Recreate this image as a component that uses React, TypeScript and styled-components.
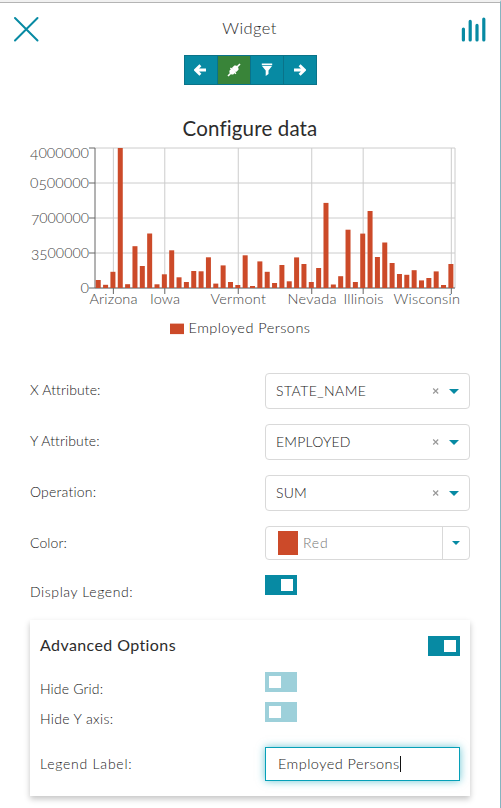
import React from 'react';
import styled, { createGlobalStyle } from 'styled-components';

const TEAL = '#078aa3';
const RED = '#cc4a29';

const GlobalStyle = createGlobalStyle`
  * { box-sizing: border-box; }
  body {
    margin: 0;
    background: #fff;
    font-family: Lato, 'Liberation Sans', sans-serif;
    font-size: 14px;
    font-weight: 300;
    color: #222;
    overflow: hidden;
  }
`;

const Panel = styled.main`
  width: 501px;
  height: 808px;
  border-top: 2px solid #f1f1f1;
  border-right: 1px solid #86b4c0;
  background: #fff;
  display: flex;
  flex-direction: column;
`;

const Header = styled.header`
  height: 53px;
  border-top: 1px solid #b4b4b4;
  padding: 0 13px 0 12px;
  display: grid;
  grid-template-columns: 27px 1fr 27px;
  align-items: center;
  justify-items: center;
`;

const Text = styled.span<{ $gap?: number }>`
  letter-spacing: ${(p) => p.$gap ?? 0}px;
  white-space: nowrap;
`;

const Title = styled(Text)`
  font-size: 16.5px;
  line-height: 20px;
  margin-bottom: 2px;
  color: #2c2c2c;
`;

const Toolbar = styled.nav`
  display: flex;
  width: 133px;
  height: 30px;
  margin: 0 auto;
  border: 1px solid #0a7389;
`;

const ToolButton = styled.button<{ $active?: boolean }>`
  flex: 1;
  padding: 0 0 1px;
  border: 0;
  background: ${(p) => (p.$active ? '#398439' : TEAL)};
  display: flex;
  align-items: center;
  justify-content: center;
  & + & { border-left: 1px solid #0a7389; }
`;

const Heading = styled.h1`
  margin: 30px 0 2px;
  height: 26px;
  line-height: 26px;
  text-align: center;
  font-size: 20.5px;
  font-weight: 400;
  color: #2c2c2c;
`;

const Chart = styled.svg`
  display: block;
  width: 500px;
  height: 230px;
`;

const Row = styled.div<{ $height: number; $label?: number }>`
  height: ${(p) => p.$height}px;
  display: grid;
  grid-template-columns: 1fr auto;
  align-items: start;
  > span { line-height: 20px; margin-top: ${(p) => p.$label ?? 7}px; }
`;

const Form = styled.section`
  padding: 0 30px;
`;

const SelectBox = styled.div`
  width: 205px;
  height: 36px;
  border: 1px solid #d9d9d9;
  border-radius: 4px;
  padding: 0 10px;
  display: flex;
  align-items: center;
  > ${Text} { margin-bottom: 2px; }
`;

const Clear = styled.span`
  margin-left: auto;
  width: 10px;
  display: flex;
`;

const Caret = styled.i<{ $size: number }>`
  border: ${(p) => p.$size}px solid transparent;
  border-top-color: ${TEAL};
  border-bottom: 0;
`;

const SelectCaret = styled(Caret)`
  margin-left: 7px;
`;

const ColorBox = styled(SelectBox)`
  height: 34px;
  padding: 0 0 0 12px;
  color: #777;
`;

const Swatch = styled.span`
  width: 20px;
  height: 24px;
  margin-right: 5px;
  background: ${RED};
`;

const ColorArrow = styled.span`
  margin-left: auto;
  width: 27px;
  height: 32px;
  border-left: 1px solid #d9d9d9;
  display: flex;
  align-items: center;
  justify-content: center;
`;

const Toggle = styled.button<{ $on?: boolean }>`
  width: 32px;
  height: 20px;
  padding: 4px;
  border: 0;
  display: flex;
  justify-content: ${(p) => (p.$on ? 'flex-end' : 'flex-start')};
  background: ${(p) => (p.$on ? TEAL : '#9dd0da')};
  &::before {
    content: '';
    width: 12px;
    height: 12px;
    background: #fff;
  }
`;

const ToggleSlot = styled.div`
  width: 205px;
`;

const Card = styled.section`
  margin: 0 30px;
  height: 176px;
  padding: 16px 10px 0;
  background: #fff;
  box-shadow: 0 3px 6px rgba(0, 0, 0, 0.23);
`;

const CardTitle = styled(Text)`
  font-size: 16px;
  font-weight: 400;
  color: #2c2c2c;
`;

const CardSlot = styled.div`
  width: 195px;
`;

const Field = styled.div`
  width: 195px;
  height: 34px;
  padding: 0 12px;
  border: 1px solid #06a0b8;
  box-shadow: 0 0 8px rgba(7, 160, 184, 0.6);
  font-size: 14.5px;
  display: flex;
  align-items: center;
  > ${Text} { margin-bottom: 2px; }
`;

const Cursor = styled.i`
  width: 1px;
  height: 16px;
  background: #111;
`;

const TOPS = [
  280, 284.8, 271.8, 148, 284.2, 246.2, 266, 233.5, 284.3, 274.3, 250.3, 277.3, 282, 271, 271.3,
  257.3, 283.6, 265.4, 282, 285, 255.3, 286, 261.4, 271.8, 283, 265, 281.3, 257.4, 264, 282, 268,
  202.9, 284.5, 276.2, 229.7, 282, 233.6, 211, 257, 242.5, 263, 274, 274.8, 270.2, 280.4, 278,
  271.4, 285, 264,
];
const BAND = 360 / TOPS.length;

/* name, band index, text start, text width */
const X_TICKS: [string, number, number, number][] = [
  ['Arizona', 2, 89.5, 48],
  ['Iowa', 9, 150, 30],
  ['Vermont', 19, 210.5, 55.5],
  ['Nevada', 29, 287.5, 49],
  ['Illinois', 36, 343.5, 40],
  ['Wisconsin', 48, 393.5, 66.5],
];

/* Each label is split into runs; a run flagged true hangs below the baseline like old-style figures. */
const Y_TICKS: { y: number; parts: [string, boolean][]; x: number; width: number }[] = [
  { y: 148, parts: [['4', true], ['000000', false]], x: 30, width: 59 },
  { y: 183, parts: [['0', false], ['5', true], ['00000', false]], x: 30, width: 59 },
  { y: 218, parts: [['7', true], ['000000', false]], x: 31, width: 58 },
  { y: 253, parts: [['35', true], ['00000', false]], x: 31, width: 58 },
  { y: 288, parts: [['0', false]], x: 80.5, width: 8.5 },
];

function EmployedChart() {
  const center = (i: number) => 95 + BAND * (i + 0.5);
  return (
    <Chart viewBox="0 143 500 230" fontFamily="Lato, sans-serif" fontWeight="300">
      <g stroke="#ccc">
        {Y_TICKS.map((t) => <line key={t.y} x1="95" x2="455" y1={t.y} y2={t.y} />)}
        {X_TICKS.map(([n, i]) => <line key={n} x1={center(i)} x2={center(i)} y1="148" y2="288" />)}
        <line x1="455" x2="455" y1="148" y2="288" />
      </g>
      <g stroke="#666">
        <line x1="95" x2="95" y1="148" y2="288" />
        <line x1="95" x2="455" y1="288" y2="288" />
        {Y_TICKS.map((t) => <line key={t.y} x1="89" x2="95" y1={t.y} y2={t.y} />)}
        {X_TICKS.map(([n, i]) => <line key={n} x1={center(i)} x2={center(i)} y1="288" y2="294" />)}
      </g>
      <g fill={RED}>
        {TOPS.map((top, i) => (
          <rect key={i} x={95.73 + BAND * i} y={top} width="5" height={288 - top} />
        ))}
        <rect x="170" y="323.6" width="14" height="10.5" />
      </g>
      <g fill="#444" fontSize="13">
        {Y_TICKS.map((t) => {
          let low = false;
          return (
            <text key={t.y} x={t.x} y={t.y === 148 ? 158 : t.y + 5} textLength={t.width} lengthAdjust="spacingAndGlyphs">
              {t.parts.map(([s, drop], k) => {
                const dy = drop === low ? 0 : drop ? 2 : -2;
                low = drop;
                return <tspan key={k} dy={dy}>{s}</tspan>;
              })}
            </text>
          );
        })}
      </g>
      <g fill="#444" fontSize="14.5">
        {X_TICKS.map(([n, , x, w]) => (
          <text key={n} x={x} y="303.5" textLength={w}>{n}</text>
        ))}
        <text x="188.5" y="333" textLength="121.5" fill="#222">Employed Persons</text>
      </g>
    </Chart>
  );
}

function Select({ value, gap }: { value: string; gap: number }) {
  return (
    <SelectBox>
      <Text $gap={gap}>{value}</Text>
      <Clear>
        <svg width="8" height="8" viewBox="0 0 8 8" stroke="#999" strokeWidth="1.2">
          <path d="M1.2 1.5l5 5M6.2 1.5l-5 5" />
        </svg>
      </Clear>
      <SelectCaret $size={5} />
    </SelectBox>
  );
}

const arrow = 'M6.4 1.2L1.6 6l4.8 4.8M1.8 6H12';

export default function App() {
  return (
    <>
      <GlobalStyle />
      <Panel>
        <Header>
          <svg width="26" height="26" viewBox="0 0 26 26" stroke={TEAL} strokeWidth="2" strokeLinecap="round">
            <path d="M2 2l22.5 22.5M24.5 2L2 24.5" />
          </svg>
          <Title $gap={0.4}>Widget</Title>
          <svg width="25" height="25" viewBox="0 0 25 25" stroke={TEAL} strokeWidth="3.2" strokeLinecap="round">
            <path d="M2.4 12v11M9.2 4.4V23M16 8.4V23M22.8 2V23" />
          </svg>
        </Header>
        <Toolbar>
          <ToolButton>
            <svg width="13" height="12" viewBox="0 0 13 12" fill="none" stroke="#fff" strokeWidth="2.8"><path d={arrow} /></svg>
          </ToolButton>
          <ToolButton $active>
            <svg width="14" height="14" viewBox="0 0 14 14">
              <g transform="rotate(-45 7 7)" fill="#fff">
                <rect x="-1.5" y="6.2" width="17" height="1.6" />
                <path d="M3.2 4.3h2V3h1.400v1.300H7.200v5.400h-.8V11H5V9.700H3.200L2 8.500v-3z" />
                <path d="M7 4h3.400L11.700 5.500v3L10.400 10H7z" />
              </g>
            </svg>
          </ToolButton>
          <ToolButton>
            <svg width="12" height="13" viewBox="0 0 12 13" fill="#fff">
              <path d="M.8.5h10.400v1.800H.8zM1 2.900h10L7.500 7.500v3.400L4.700 13V7.500z" />
            </svg>
          </ToolButton>
          <ToolButton>
            <svg width="13" height="12" viewBox="0 0 13 12" fill="none" stroke="#fff" strokeWidth="2.8"><path d={arrow} transform="matrix(-1 0 0 1 13 0)" /></svg>
          </ToolButton>
        </Toolbar>
        <Heading><Text $gap={0.15}>Configure data</Text></Heading>
        <EmployedChart />
        <Form>
          <Row $height={51}><Text $gap={0.1}>X Attribute:</Text><Select value="STATE_NAME" gap={0.45} /></Row>
          <Row $height={51}><Text $gap={0.1}>Y Attribute:</Text><Select value="EMPLOYED" gap={0.2} /></Row>
          <Row $height={51}><Text $gap={0.2}>Operation:</Text><Select value="SUM" gap={0.2} /></Row>
          <Row $height={49}>
            <Text $gap={0.1}>Color:</Text>
            <ColorBox>
              <Swatch />
              <Text $gap={0.8}>Red</Text>
              <ColorArrow><Caret $size={4} /></ColorArrow>
            </ColorBox>
          </Row>
          <Row $height={45}>
            <Text $gap={0.6}>Display Legend:</Text>
            <ToggleSlot><Toggle $on /></ToggleSlot>
          </Row>
        </Form>
        <Card>
          <Row $height={36} $label={-1}><CardTitle $gap={0.4}>Advanced Options</CardTitle><Toggle $on /></Row>
          <Row $height={30}><Text $gap={0.15}>Hide Grid:</Text><CardSlot><Toggle /></CardSlot></Row>
          <Row $height={45}><Text $gap={0.35}>Hide Y axis:</Text><CardSlot><Toggle /></CardSlot></Row>
          <Row $height={34}>
            <Text $gap={0.75}>Legend Label:</Text>
            <Field><Text $gap={0.45}>Employed Persons</Text><Cursor /></Field>
          </Row>
        </Card>
      </Panel>
    </>
  );
}
